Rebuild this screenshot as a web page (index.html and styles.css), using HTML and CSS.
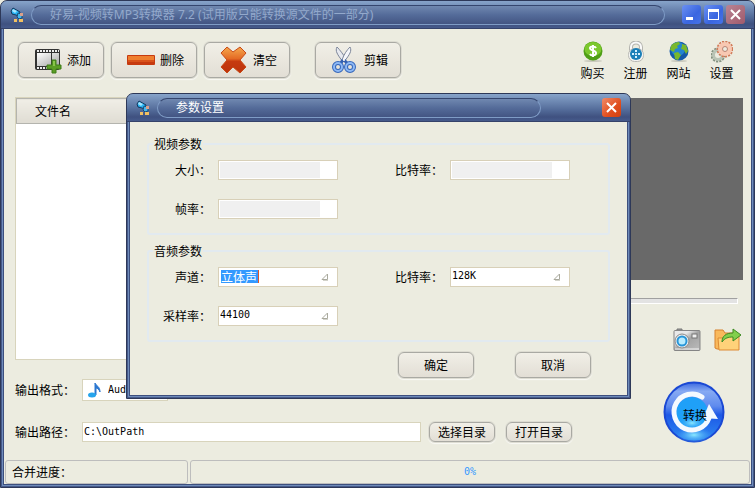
FILE: index.html
```html
<!DOCTYPE html>
<html lang="zh-CN">
<head>
    <meta charset="UTF-8">
    <meta name="viewport" content="width=device-width, initial-scale=1.0">
    <title>好易-视频转MP3转换器</title>
    <link rel="stylesheet" href="styles.css">
</head>
<body>
    <!-- Shared icon shapes -->
    <svg class="sprites" aria-hidden="true">
        <symbol id="logo" viewBox="0 0 16 16">
            <path d="M2 4l2-3 7 4-1 4-3-1-4-1z" fill="#28b5f5" stroke="#12365c" stroke-width="1"/>
            <path d="M4 2l4 2-2 2-3-2z" fill="#a8e6ff"/>
            <path d="M9 6l4 1v4l-3 1-2-2z" fill="#42b6ee" stroke="#164a76" stroke-width="1"/>
            <path d="M11 6h3v3h-3z" fill="#d9a08b"/>
            <path d="M5 12h3v3H5zM10 12h4v3h-4z" fill="#f2c062"/>
        </symbol>
        <symbol id="arrow" viewBox="0 0 8 8">
            <path d="M1 6.500L6.500 1v5.500z" fill="#fff" stroke="#a9a99d" stroke-width="1"/>
            <path d="M2 7.500h5" stroke="#d2d2ca" stroke-width="1"/>
        </symbol>
    </svg>

    <div class="window">
        <header class="titlebar">
            <svg class="logo"><use href="#logo"/></svg>
            <h1 class="caption inactive">好易-视频转MP3转换器 7.2 (试用版只能转换源文件的一部分)</h1>
            <div class="controls">
                <button class="control" aria-label="最小化">
                    <svg viewBox="0 0 19 19"><path d="M4 12h7v3H4z" fill="#fff"/></svg>
                </button>
                <button class="control" aria-label="最大化">
                    <svg viewBox="0 0 19 19"><path d="M4 4h11v11H4zM5 7h9v7H5z" fill="#fff" fill-rule="evenodd"/></svg>
                </button>
                <button class="control dim" aria-label="关闭">
                    <svg viewBox="0 0 19 19"><path d="M5 5l9 9M14 5l-9 9" stroke="#fff" stroke-width="2"/></svg>
                </button>
            </div>
        </header>

        <div class="toolbar">
            <button class="btn tool">
                <svg viewBox="0 0 28 28">
                    <defs><linearGradient id="film" x2="1" y2="1"><stop stop-color="#fff"/><stop offset="1" stop-color="#a5a5a5"/></linearGradient></defs>
                    <rect x="1" y="3" width="25" height="21" rx="2" fill="#333"/>
                    <path d="M3 7h14v13H3zM18 7h7v13h-7z" fill="url(#film)"/>
                    <path d="M3 5h22M3 22h22" stroke="#eee" stroke-width="2" stroke-dasharray="2 1"/>
                    <path d="M18 14h4v5h5v4h-5v4h-4v-4h-5v-4h5z" fill="#5b9d25" stroke="#3f7d18"/>
                    <path d="M19 15h2v5h-2z" fill="#88c64a"/>
                </svg>
                添加
            </button>
            <button class="btn tool">
                <svg viewBox="0 0 28 28">
                    <rect x="0" y="9" width="28" height="10" rx="1" fill="#c63a10"/>
                    <path d="M1 10h26v4H1z" fill="#ef7f2f"/>
                    <path d="M1 14h26v2H1z" fill="#d9521b"/>
                </svg>
                删除
            </button>
            <button class="btn tool">
                <svg viewBox="0 0 28 28">
                    <defs><linearGradient id="cross" x2="0" y2="1"><stop offset=".1" stop-color="#f29b45"/><stop offset=".45" stop-color="#e46a24"/><stop offset=".55" stop-color="#c63a10"/><stop offset="1" stop-color="#bd330c"/></linearGradient></defs>
                    <path d="M7 1l6 5 7-5 6 6-6 7 6 7-6 6-7-6-6 6-6-6 6-7-6-7z" fill="url(#cross)" stroke="#c84a17"/>
                </svg>
                清空
            </button>
            <button class="btn tool spaced">
                <svg viewBox="0 0 28 28">
                    <path d="M6 1c-2 4 0 7 6 15l3-3C12 8 9 4 6 1z" fill="#e7e9ef" stroke="#7c8599"/>
                    <path d="M19 1c2 4 0 7-6 15l-2-2C13 8 16 4 19 1z" fill="#f5f6fa" stroke="#7c8599"/>
                    <path d="M12 14l-3 4M13 14l4 4" stroke="#345fae" stroke-width="3"/>
                    <ellipse cx="7" cy="21" rx="4" ry="4" fill="none" stroke="#3566ba" stroke-width="4"/>
                    <ellipse cx="7" cy="21" rx="4" ry="4" fill="none" stroke="#8db8f4" stroke-width="2"/>
                    <ellipse cx="19" cy="21" rx="4" ry="4" fill="none" stroke="#3566ba" stroke-width="4"/>
                    <ellipse cx="19" cy="21" rx="4" ry="4" fill="none" stroke="#8db8f4" stroke-width="2"/>
                    <circle cx="13" cy="14" r="1" fill="#fff"/>
                </svg>
                剪辑
            </button>
            <nav class="links">
                <a href="#buy">
                    <svg viewBox="0 0 22 22">
                        <ellipse cx="11" cy="20" rx="9" ry="1" fill="#c9c9bd"/>
                        <circle cx="11" cy="10" r="9.500" fill="#4f9f16"/>
                        <ellipse cx="11" cy="8" rx="8.500" ry="7" fill="#7cc82d"/>
                        <path d="M14 7c-1-2-6-2-6 0 0 3 6 2 6 5 0 3-5 3-6 1M11 4v12" fill="none" stroke="#fff" stroke-width="2"/>
                    </svg>
                    购买
                </a>
                <a href="#register">
                    <svg viewBox="0 0 22 22">
                        <path d="M6 11V6a5 4.500 0 0 1 10 0v5" fill="none" stroke="#b5b5b0" stroke-width="4"/>
                        <path d="M6 11V6a5 4.500 0 0 1 10 0v5" fill="none" stroke="#fafafa" stroke-width="2"/>
                        <rect x="3.500" y="7.500" width="15" height="13" rx="6" fill="#f4f4f2" stroke="#b9b9b4"/>
                        <circle cx="11" cy="13" r="6" fill="#1b7fb8"/>
                        <path d="M11 9v2M11 15v2M7 13h2M13 13h2" stroke="#d5f1ff" stroke-width="2"/>
                        <circle cx="11" cy="13" r="1" fill="#fff"/>
                    </svg>
                    注册
                </a>
                <a href="#site">
                    <svg viewBox="0 0 22 22">
                        <ellipse cx="11" cy="20" rx="8" ry="1" fill="#c9c9bd"/>
                        <circle cx="11" cy="10" r="9.500" fill="#155aa9"/>
                        <circle cx="10" cy="8" r="7" fill="#2485cf"/>
                        <path d="M3 5c2-3 5-4 8-4l1 2-3 2 1 2-3 1-1 3-4-2zM6 12l4-1 3 3-3 5-3-1zM14 3l4 1 2 6-2 3-2-4-3-1 1-3z" fill="#79b82c"/>
                    </svg>
                    网站
                </a>
                <a href="#settings">
                    <svg viewBox="0 0 22 22">
                        <circle cx="7" cy="14" r="6" fill="none" stroke="#83917f" stroke-width="3" stroke-dasharray="2 1"/>
                        <circle cx="7" cy="14" r="4.500" fill="#ecece0" stroke="#b9c4b5" stroke-width="3"/>
                        <circle cx="14" cy="8" r="7" fill="none" stroke="#d07a58" stroke-width="3" stroke-dasharray="2 1"/>
                        <circle cx="14" cy="8" r="4.500" fill="#ecece0" stroke="#f8c8b2" stroke-width="5"/>
                        <circle cx="14" cy="8" r="2.500" fill="#ecece0" stroke="#b98474"/>
                    </svg>
                    设置
                </a>
            </nav>
        </div>

        <main class="workspace">
            <div class="filelist">
                <table>
                    <thead><tr><th>文件名</th></tr></thead>
                    <tbody></tbody>
                </table>
            </div>
            <section class="preview">
                <div class="screen"></div>
                <div class="seek"></div>
                <div class="actions">
                    <button class="icon-btn" aria-label="截图">
                        <svg viewBox="0 0 28 24">
                            <defs><linearGradient id="body" x2="1" y2="1"><stop offset=".3" stop-color="#e9e9e9"/><stop offset=".5" stop-color="#a3a3a3"/><stop offset="1" stop-color="#bcbcbc"/></linearGradient></defs>
                            <path d="M4 3V1h5v2" fill="#999" stroke="#777"/>
                            <rect x="1" y="2.500" width="26" height="20" rx="1" fill="url(#body)" stroke="#858585"/>
                            <path d="M2 21h24" stroke="#f5f5f5"/>
                            <rect x="19" y="6" width="5" height="4" fill="#eee" stroke="#777"/>
                            <circle cx="9" cy="13" r="7" fill="#eee" stroke="#888"/>
                            <circle cx="9" cy="13" r="4.500" fill="#b8ecff" stroke="#2795d8" stroke-width="2"/>
                        </svg>
                    </button>
                    <button class="icon-btn" aria-label="打开文件夹">
                        <svg viewBox="0 0 28 24">
                            <path d="M1 3V2h8l2 3h10v16H3l-2-1z" fill="#f9b95c" stroke="#d7822f"/>
                            <path d="M4 10h8l2-2h11v14H5z" fill="#ffd27a" stroke="#dd8a35"/>
                            <path d="M8 14c0-6 4-9 11-9V1l8 6-8 6V9c-5 0-8 1-11 5z" fill="#82cf4c" stroke="#3c8a22"/>
                        </svg>
                    </button>
                </div>
            </section>
        </main>

        <div class="output">
            <form class="paths">
                <div class="row">
                    <label for="format">输出格式：</label>
                    <div class="format">
                        <svg viewBox="0 0 14 16">
                            <path d="M7 1c1 3 5 3 5 9-1-3-3-4-4-4v7H7z" fill="#2b77d0" stroke="#2b77d0" stroke-width="1"/>
                            <ellipse cx="4" cy="13" rx="4" ry="2.500" fill="#25a4ec"/>
                        </svg>
                        <select id="format"><option>Audio</option></select>
                    </div>
                </div>
                <div class="row">
                    <label for="path">输出路径：</label>
                    <input class="path" id="path" type="text" value="C:\OutPath">
                    <button class="btn small" type="button">选择目录</button>
                    <button class="btn small" type="button">打开目录</button>
                </div>
            </form>
            <button class="convert">
                <svg viewBox="0 0 62 62" aria-hidden="true">
                    <defs>
                        <linearGradient id="ball" x2="0" y2="1"><stop stop-color="#3a68e0"/><stop offset=".15" stop-color="#86a9f3"/><stop offset=".4" stop-color="#5f8bee"/><stop offset=".55" stop-color="#1d58e6"/><stop offset="1" stop-color="#2f8cf2"/></linearGradient>
                        <radialGradient id="glow"><stop stop-color="#8ae9ff"/><stop offset="1" stop-color="#3fa4f6" stop-opacity="0"/></radialGradient>
                    </defs>
                    <circle cx="31" cy="31" r="29.500" fill="url(#ball)" stroke="#1a48d4" stroke-width="2"/>
                    <ellipse cx="31" cy="54" rx="18" ry="8" fill="url(#glow)"/>
                    <circle cx="29" cy="32" r="16" fill="#1fa0f8"/>
                    <ellipse cx="29" cy="42" rx="12" ry="6" fill="url(#glow)"/>
                    <path d="M39 16a18 18 0 1 0 7 21" fill="none" stroke="#f4f9ff" stroke-width="5" stroke-linecap="round"/>
                    <path d="M46 23l9 15-15-1z" fill="#f4f9ff"/>
                </svg>
                <span>转换</span>
            </button>
        </div>

        <footer class="statusbar">
            <div class="cell">合并进度：</div>
            <div class="cell progress">0%</div>
        </footer>
    </div>

    <div class="window dialog" role="dialog" aria-labelledby="dialog-title">
        <header class="titlebar">
            <svg class="logo"><use href="#logo"/></svg>
            <h2 class="caption" id="dialog-title">参数设置</h2>
            <div class="controls">
                <button class="control close" aria-label="关闭">
                    <svg viewBox="0 0 19 19"><path d="M5 5l9 9M14 5l-9 9" stroke="#fff" stroke-width="2"/></svg>
                </button>
            </div>
        </header>
        <form class="settings">
            <fieldset>
                <legend>视频参数</legend>
                <div class="fields">
                    <label for="size">大小：</label>
                    <div class="combo"><select id="size" disabled></select></div>
                    <label for="vrate">比特率：</label>
                    <div class="combo"><select id="vrate" disabled></select></div>
                    <label for="fps">帧率：</label>
                    <div class="combo"><select id="fps" disabled></select></div>
                </div>
            </fieldset>
            <fieldset>
                <legend>音频参数</legend>
                <div class="fields">
                    <label for="channel">声道：</label>
                    <div class="combo selected"><select id="channel"><option>立体声</option></select><svg><use href="#arrow"/></svg></div>
                    <label for="arate">比特率：</label>
                    <div class="combo"><select id="arate"><option>128K</option></select><svg><use href="#arrow"/></svg></div>
                    <label for="sample">采样率：</label>
                    <div class="combo"><select id="sample"><option>44100</option></select><svg><use href="#arrow"/></svg></div>
                </div>
            </fieldset>
            <div class="buttons">
                <button class="btn" type="submit">确定</button>
                <button class="btn" type="button">取消</button>
            </div>
        </form>
    </div>
</body>
</html>
```
FILE: styles.css
```css
* {
    box-sizing: border-box;
}
body {
    margin: 0;
    font-family: "DejaVu Sans Mono", "Noto Sans CJK SC", monospace;
    font-size: 12px;
    line-height: 16px;
    color: #000;
    background: #ecece0;
}
button, input, select {
    font: inherit;
    color: inherit;
    margin: 0;
    padding: 0;
}
label, legend, button, .links, .filelist, .cell {
    font-family: "Noto Sans CJK SC", sans-serif;
}
.sprites {
    position: absolute;
    width: 0;
    height: 0;
}

/* Window frame */
.window {
    display: flex;
    flex-direction: column;
    min-height: 100vh;
    border: 1px solid #2d3858;
    border-radius: 7px 7px 0 0;
    background: #ecece0;
    box-shadow: inset 0 0 0 1px #46598a, inset 0 0 0 2px #6f8cba, inset 0 0 0 3px #3d4f7e;
    padding: 0 3px 3px;
}
.titlebar {
    display: flex;
    align-items: center;
    height: 28px;
    margin: 0 -3px;
    padding: 0 9px 0 8px;
    border-bottom: 1px solid #35426a;
    border-radius: 6px 6px 0 0;
    background: linear-gradient(#87a4ca, #7590b9 20%, #526a98 60%, #3f5180 85%, #465a8b);
}
.logo {
    width: 16px;
    height: 16px;
}
.caption {
    flex: 1;
    height: 20px;
    margin: 0 17px 0 6px;
    padding: 0 18px;
    border: 1px solid #7f9cc6;
    border-top-color: #35466f;
    border-radius: 10px;
    background: linear-gradient(#7088b0, #546b99 50%, #435583);
    font: 12px/18px "Noto Sans", "Noto Sans CJK SC", sans-serif;
    color: #fff;
    white-space: nowrap;
    overflow: hidden;
}
.caption.inactive {
    color: #93a9cc;
}
.controls {
    display: flex;
    gap: 3px;
}
.control {
    display: block;
    width: 19px;
    height: 19px;
    border: 0;
    border-radius: 3px;
    background: linear-gradient(135deg, #6b90f2, #3a66e0 60%, #4673e8);
}
.control svg {
    display: block;
}
.control.dim {
    background: linear-gradient(135deg, #b98494, #a05a6c);
}
.control.close {
    background: linear-gradient(135deg, #f08a68, #e04e1e 60%, #d0400f);
}

/* Buttons */
.btn {
    border: 1px solid #a9a9a3;
    border-radius: 6px;
    background: linear-gradient(#f1efe7, #e2ded5);
    box-shadow: 0 0 0 1px #dddcd2, 0 1px 1px 1px #fafaf6;
    cursor: pointer;
}
.btn.tool {
    display: flex;
    align-items: center;
    gap: 5px;
    width: 86px;
    height: 36px;
    padding-left: 15px;
}
.btn.small {
    width: 66px;
    height: 20px;
    line-height: 18px;
}
.btn.spaced {
    margin-left: 18px;
}
.tool svg {
    width: 28px;
    height: 28px;
}

/* Toolbar */
.toolbar {
    display: flex;
    gap: 7px;
    height: 68px;
    padding: 13px 8px 0 14px;
}
.links {
    display: flex;
    margin-left: auto;
}
.links a {
    display: flex;
    flex-direction: column;
    align-items: center;
    gap: 2px;
    width: 43px;
    margin-top: -1px;
    color: #000;
    text-decoration: none;
}
.links svg {
    width: 22px;
    height: 22px;
}

/* File list and preview */
.workspace {
    display: flex;
    gap: 12px;
    padding: 0 8px 0 11px;
}
.filelist {
    flex: 1;
    border: 1px solid #d8d4bc;
    background: #fff;
}
.filelist table {
    width: 100%;
    border-collapse: collapse;
}
.filelist th {
    height: 25px;
    padding: 0 0 0 18px;
    border: 1px solid #b4b4ae;
    background: linear-gradient(#f0eee6, #dfdcd3);
    font-weight: normal;
    text-align: left;
}
.preview {
    width: 340px;
    height: 263px;
    padding-top: 1px;
}
.screen {
    height: 182px;
    background: #696969;
}
.seek {
    height: 6px;
    margin: 18px 5px 0 0;
    border: 1px solid #fff;
    border-top-color: #a0a0a0;
    background: #e3e3e3;
}
.actions {
    display: flex;
    justify-content: flex-end;
    gap: 13px;
    margin: 24px 1px 0 0;
}
.icon-btn {
    border: 0;
    background: none;
}
.icon-btn svg {
    display: block;
    width: 28px;
    height: 24px;
}

/* Output options */
.output {
    display: flex;
    justify-content: space-between;
    padding: 19px 26px 0 11px;
}
.paths {
    display: flex;
    flex-direction: column;
    gap: 20px;
}
.row {
    display: flex;
    align-items: center;
    height: 22px;
}
.row label {
    width: 67px;
}
.row .small {
    margin: 0 3px 0 8px;
}
.format {
    display: flex;
    align-items: center;
    gap: 6px;
    width: 86px;
    height: 22px;
    padding-left: 5px;
    border: 1px solid #d8d4bc;
    background: #fff;
}
.format svg {
    width: 14px;
    height: 16px;
}
.format select {
    flex: 1;
    border: 0;
    background: none;
    appearance: none;
    font-size: 10px;
}
.path {
    width: 339px;
    height: 20px;
    padding: 0 1px 2px;
    border: 1px solid #d8d4bc;
    background: #fff;
    font-size: 10px;
}
.convert {
    display: grid;
    place-items: center;
    width: 62px;
    height: 62px;
    margin-top: 2px;
    border: 0;
    background: none;
}
.convert svg, .convert span {
    grid-area: 1 / 1;
}
.convert svg {
    width: 62px;
    height: 62px;
}
.convert span {
    padding: 6px 0 0 2px;
    z-index: 1;
}

/* Status bar */
.statusbar {
    display: flex;
    gap: 2px;
    margin-top: auto;
    padding: 0 1px;
}
.cell {
    width: 183px;
    height: 24px;
    padding-left: 6px;
    border: 1px solid #bdbdbd;
    border-radius: 3px;
    line-height: 22px;
}
.cell.progress {
    flex: 1;
    padding: 0;
    font: 10px/22px "DejaVu Sans Mono", monospace;
    color: #3399ff;
    text-align: center;
}

/* Settings dialog */
.dialog {
    position: absolute;
    top: 93px;
    left: 126px;
    width: 505px;
    min-height: 0;
}
.dialog .caption {
    margin-right: 61px;
}
.settings {
    padding: 14px 17px 17px;
}
fieldset {
    height: 99px;
    margin: 0 0 8px;
    padding: 0;
    border: 2px solid #e2eaf0;
    border-radius: 3px;
}
legend {
    margin-left: 4px;
    padding: 0 1px;
}
.fields {
    display: grid;
    grid-template-columns: 69px 120px 112px 120px;
    row-gap: 19px;
    align-items: center;
    padding-top: 8px;
}
.fields label {
    padding-right: 7px;
    text-align: right;
}
.combo {
    display: grid;
    align-items: center;
    height: 20px;
    border: 1px solid #d8d0b8;
    background: #fff;
}
.combo select, .combo svg {
    grid-area: 1 / 1;
}
.combo select {
    height: 18px;
    padding: 0 1px 2px;
    border: 0;
    border-radius: 0;
    background: none;
    appearance: none;
    font-size: 10px;
}
.combo select:disabled {
    width: 100px;
    height: 16px;
    margin-left: 1px;
    background: #f0f0f0;
    opacity: 1;
}
.combo.selected select {
    width: 38px;
    height: 13px;
    margin: 0 0 2px 2px;
    padding: 0;
    border-right: 1px solid #e0562a;
    background: #3399ff;
    color: #fff;
    font: 12px/13px "Noto Sans CJK SC", sans-serif;
}
.combo svg {
    justify-self: end;
    width: 8px;
    height: 8px;
    margin-right: 8px;
}
.buttons {
    display: flex;
    justify-content: flex-end;
    gap: 41px;
    padding: 2px 19px 0 0;
}
.buttons .btn {
    width: 76px;
    height: 26px;
}
```
